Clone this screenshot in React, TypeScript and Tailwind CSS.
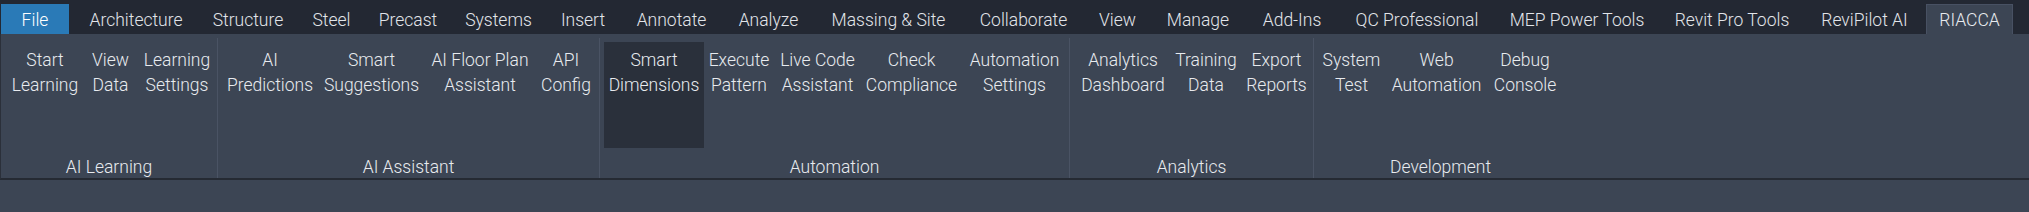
import React from "react";

type Tab = { label: string; w: string; active?: boolean };

const tabs: Tab[] = [
  { label: "Architecture", w: "w-[124px]" },
  { label: "Structure", w: "w-[100px]" },
  { label: "Steel", w: "w-[67px]" },
  { label: "Precast", w: "w-[86px]" },
  { label: "Systems", w: "w-[95px]" },
  { label: "Insert", w: "w-[74px]" },
  { label: "Annotate", w: "w-[103px]" },
  { label: "Analyze", w: "w-[91px]" },
  { label: "Massing & Site", w: "w-[149px]" },
  { label: "Collaborate", w: "w-[121px]" },
  { label: "View", w: "w-[67px]" },
  { label: "Manage", w: "w-[94px]" },
  { label: "Add-Ins", w: "w-[94px]" },
  { label: "QC Professional", w: "w-[156px]" },
  { label: "MEP Power Tools", w: "w-[164px]" },
  { label: "Revit Pro Tools", w: "w-[146px]" },
  { label: "ReviPilot AI", w: "w-[119px]" },
];

type Btn = { lines: [string, string]; w: string; hot?: boolean };
type Group = { label: string; pad: string; buttons: Btn[]; last?: boolean };

const groups: Group[] = [
  {
    label: "AI Learning",
    pad: "pl-[6px] pr-[1px]",
    buttons: [
      { lines: ["Start", "Learning"], w: "w-[76px]" },
      { lines: ["View", "Data"], w: "w-[55px]" },
      { lines: ["Learning", "Settings"], w: "w-[78px]" },
    ],
  },
  {
    label: "AI Assistant",
    pad: "pl-[4px] pr-[2px]",
    buttons: [
      { lines: ["AI", "Predictions"], w: "w-[96px]" },
      { lines: ["Smart", "Suggestions"], w: "w-[107px]" },
      { lines: ["AI Floor Plan", "Assistant"], w: "w-[110px]" },
      { lines: ["API", "Config"], w: "w-[62px]" },
    ],
  },
  {
    label: "Automation",
    pad: "pl-[4px] pr-[2px]",
    buttons: [
      { lines: ["Smart", "Dimensions"], w: "w-[100px]", hot: true },
      { lines: ["Execute", "Pattern"], w: "w-[70px]" },
      { lines: ["Live Code", "Assistant"], w: "w-[87px]" },
      { lines: ["Check", "Compliance"], w: "w-[101px]" },
      { lines: ["Automation", "Settings"], w: "w-[105px]" },
    ],
  },
  {
    label: "Analytics",
    pad: "pl-[5px] pr-[1px]",
    buttons: [
      { lines: ["Analytics", "Dashboard"], w: "w-[96px]" },
      { lines: ["Training", "Data"], w: "w-[70px]" },
      { lines: ["Export", "Reports"], w: "w-[71px]" },
    ],
  },
  {
    label: "Development",
    pad: "pl-[4px] pr-[5px]",
    last: true,
    buttons: [
      { lines: ["System", "Test"], w: "w-[67px]" },
      { lines: ["Web", "Automation"], w: "w-[103px]" },
      { lines: ["Debug", "Console"], w: "w-[74px]" },
    ],
  },
];

function RibbonButton({ btn }: { btn: Btn }) {
  return (
    <div
      className={`${btn.w} flex h-[106px] shrink-0 flex-col items-center pt-[6px] leading-[25px] whitespace-nowrap ${
        btn.hot ? "bg-[#2a303b]" : ""
      }`}
    >
      <span>{btn.lines[0]}</span>
      <span>{btn.lines[1]}</span>
    </div>
  );
}

export default function App() {
  return (
    <div className="h-[212px] w-full overflow-hidden bg-[#3c4554] font-['Roboto',sans-serif] text-[17.5px] font-light text-[#e8ebef]">
      {/* tab strip */}
      <div className="flex h-[34px] items-end bg-[#232833] pl-[1px]">
        <div className="mr-[5px] h-[30px] w-[68px] bg-[#2a7ab7] text-center leading-[32px] text-white">
          File
        </div>
        {tabs.map((t) => (
          <div
            key={t.label}
            className={`${t.w} h-[30px] shrink-0 text-center leading-[32px] whitespace-nowrap text-[#e2e5ea]`}
          >
            {t.label}
          </div>
        ))}
        <div className="ml-[2px] h-[30px] w-[87px] shrink-0 border-x border-t border-[#485163] bg-[#3c4554] text-center leading-[31px]">
          RIACCA
        </div>
      </div>

      {/* ribbon panel */}
      <div className="flex h-[146px] border-b-2 border-l border-b-[#252a33] border-l-[#2b303a]">
        {groups.map((g) => (
          <div
            key={g.label}
            className={`mt-[4px] flex h-[140px] flex-col ${
              g.last ? "" : "border-r border-[#4a5364]"
            }`}
          >
            <div className={`flex pt-[4px] ${g.pad}`}>
              {g.buttons.map((b) => (
                <RibbonButton key={b.lines.join(" ")} btn={b} />
              ))}
            </div>
            <div className="pt-[8px] text-center leading-[22px] whitespace-nowrap">
              {g.label}
            </div>
          </div>
        ))}
      </div>
    </div>
  );
}
